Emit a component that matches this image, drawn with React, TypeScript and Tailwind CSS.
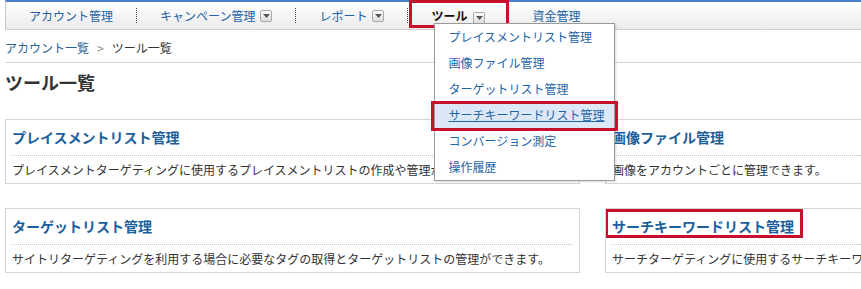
import React from "react";

const font = { fontFamily: '"Noto Sans CJK JP", "Noto Sans", sans-serif' };

function DropIcon() {
  return (
    <span className="ml-[5px] inline-flex h-[12px] w-[12px] items-center justify-center rounded-[2px] border border-[#a8a8a8] bg-gradient-to-b from-white to-[#dcdcdc]">
      <svg width="7" height="4" viewBox="0 0 7 4">
        <path d="M0 0 L7 0 L3.5 4 Z" fill="#555" />
      </svg>
    </span>
  );
}

function Sep() {
  return <span className="h-[15px] w-0 border-l border-dotted border-[#444]" />;
}

const menuItems = [
  "プレイスメントリスト管理",
  "画像ファイル管理",
  "ターゲットリスト管理",
  "サーチキーワードリスト管理",
  "コンバージョン測定",
  "操作履歴",
];

function Card({
  title,
  desc,
  marked,
}: {
  title: string;
  desc: string;
  marked?: boolean;
}) {
  return (
    <div className="relative h-[65px] overflow-hidden border border-[#d6d6d6] bg-white">
      {marked && (
        <span className="absolute left-[-1px] top-0 h-[29px] w-[198px] border-[3px] border-[#c8102e]" />
      )}
      <div className="mx-[6px] border-b border-dotted border-[#c4c4c4] pb-[7px] pt-[4px]">
        <span className="whitespace-nowrap text-[14px] font-bold leading-[20px] text-[#1b5e9c]">
          {title}
        </span>
      </div>
      <div className="whitespace-nowrap px-[6px] pt-[6px] text-[12px] leading-[16px] text-[#333]">
        {desc}
      </div>
    </div>
  );
}

export default function App() {
  return (
    <div
      className="relative h-[289px] w-[861px] overflow-hidden bg-white pl-[5px]"
      style={font}
    >
      {/* Global nav */}
      <nav className="relative z-20 flex h-[30px] items-center border-b border-l border-t-2 border-b-[#cfcfcf] border-l-[#c8c8c8] border-t-[#4a80d0] bg-gradient-to-b from-white to-[#ebebeb] text-[12px] leading-[16px]">
        <a className="px-[23px] text-[#2060a6]">アカウント管理</a>
        <Sep />
        <a className="flex items-center px-[23px] text-[#2060a6]">
          キャンペーン管理
          <DropIcon />
        </a>
        <Sep />
        <a className="flex items-center px-[23px] text-[#2060a6]">
          レポート
          <DropIcon />
        </a>
        <Sep />
        <div className="relative flex h-full items-center px-[23px]">
          <span className="absolute -top-[2px] left-[1px] h-[28px] w-[100px] border-[3px] border-[#c8102e]" />
          <span className="font-bold text-[#111]">ツール</span>
          <span className="ml-[1px]">
            <DropIcon />
          </span>
          {/* Dropdown menu */}
          <div className="absolute left-[26px] top-[21px] w-[181px] border border-[#9a9a9a] bg-white shadow-[1px_1px_2px_rgba(0,0,0,0.15)]">
            {menuItems.map((m, i) => (
              <div
                key={m}
                className={
                  "relative flex h-[26px] items-center whitespace-nowrap pl-[13px] text-[12px] " +
                  (i === 3 ? "bg-[#dde8f6] text-[#1d64a8] underline" : "text-[#1d64a8]")
                }
              >
                {i === 3 && (
                  <span className="absolute -left-[4px] -right-[4px] -top-[1px] -bottom-[3px] border-[3px] border-[#c8102e]" />
                )}
                {m}
              </div>
            ))}
          </div>
        </div>
        <Sep />
        <a className="px-[23px] text-[#2060a6]">資金管理</a>
      </nav>

      {/* Breadcrumb */}
      <div className="mt-[10px] flex items-center gap-[8px] border-b border-[#d5d5d5] pb-[6px] text-[12px] leading-[16px]">
        <span className="text-[#2a5f96]">アカウント一覧</span>
        <span className="text-[#888]">&gt;</span>
        <span className="text-[#333]">ツール一覧</span>
      </div>

      {/* Title */}
      <h1 className="mt-[7px] text-[18px] font-bold leading-[24px] text-[#333]">
        ツール一覧
      </h1>

      {/* Cards */}
      <div className="mt-[25px] grid grid-cols-[575px_575px] gap-x-[25px] gap-y-[24px]">
        <Card
          title="プレイスメントリスト管理"
          desc="プレイスメントターゲティングに使用するプレイスメントリストの作成や管理ができます。"
        />
        <Card title="画像ファイル管理" desc="画像をアカウントごとに管理できます。" />
        <Card
          title="ターゲットリスト管理"
          desc="サイトリターゲティングを利用する場合に必要なタグの取得とターゲットリストの管理ができます。"
        />
        <Card
          title="サーチキーワードリスト管理"
          desc="サーチターゲティングに使用するサーチキーワードリストの作成や管理ができます。"
          marked
        />
      </div>
    </div>
  );
}
